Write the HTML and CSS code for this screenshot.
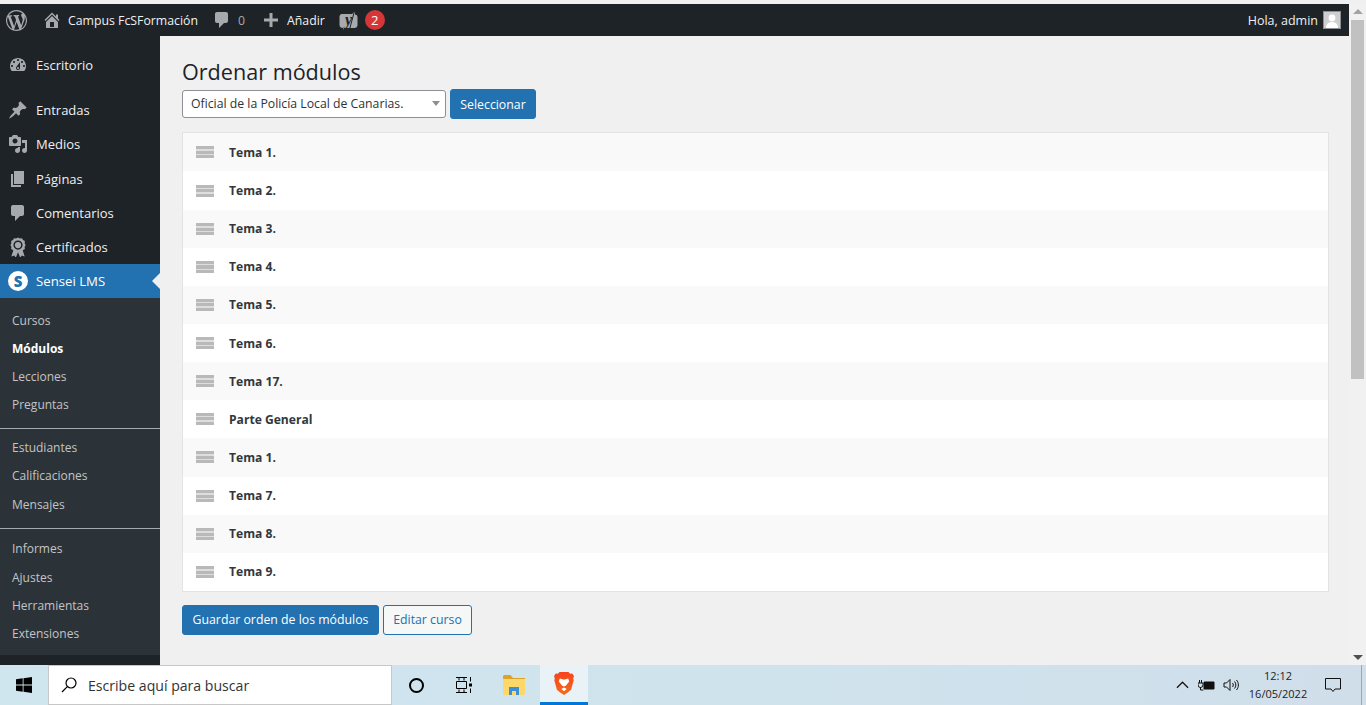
FILE: index.html
```html
<!DOCTYPE html>
<html lang="es">
<head>
    <meta charset="UTF-8">
    <title>Ordenar módulos</title>
    <link rel="stylesheet" href="styles.css">
</head>
<body>
    <div class="window">
        <div class="page">
            <div class="adminbar">
                <svg class="ab-wp" viewBox="0 0 20 20"><path d="M20 10c0-5.51-4.49-10-10-10C4.48 0 0 4.49 0 10c0 5.52 4.48 10 10 10 5.51 0 10-4.48 10-10zM7.78 15.37L4.37 6.22c.55-.02 1.17-.08 1.17-.08.5-.06.44-1.13-.06-1.11 0 0-1.45.11-2.37.11-.18 0-.37 0-.58-.01C4.12 2.69 6.87 1.11 10 1.11c2.33 0 4.45.87 6.05 2.34-.68-.11-1.65.39-1.65 1.58 0 .74.45 1.36.9 2.1.35.61.55 1.36.55 2.46 0 1.49-1.4 5-1.4 5l-3.03-8.37c.54-.02.82-.17.82-.17.5-.05.44-1.25-.06-1.22 0 0-1.44.12-2.38.12-.87 0-2.33-.12-2.33-.12-.5-.03-.56 1.2-.06 1.22l.92.08 1.26 3.41zM17.41 10c.24-.64.74-1.87.43-4.25.7 1.29 1.05 2.71 1.05 4.25 0 3.29-1.73 6.24-4.4 7.78.97-2.59 1.94-5.2 2.92-7.78zM6.1 18.09C3.12 16.65 1.11 13.53 1.11 10c0-1.3.23-2.48.72-3.59C3.25 10.3 4.67 14.2 6.1 18.09zm4.03-6.63l2.58 6.98c-.86.29-1.76.45-2.71.45-.79 0-1.57-.11-2.29-.33.81-2.38 1.62-4.74 2.42-7.1z"/></svg>
                <svg class="ab-icon ab-home" viewBox="0 0 20 20"><path d="M16 8.5l1.53 1.53-1.06 1.06L10 4.62l-6.47 6.47-1.06-1.06L10 2.5l4 4v-2h2v4zm-6-2.46l6 5.99V18H4v-5.97zM12 17v-5H8v5h4z"/></svg>
                <span class="ab-site">Campus FcSFormación</span>
                <svg class="ab-icon ab-comment" viewBox="0 0 20 20"><path d="M5 2h9c1.1 0 2 .9 2 2v7c0 1.1-.9 2-2 2h-2l-5 5v-5H5c-1.1 0-2-.9-2-2V4c0-1.1.9-2 2-2z"/></svg>
                <span class="ab-count">0</span>
                <svg class="ab-icon ab-plus" viewBox="0 0 20 20"><path d="M17 8.500v3h-5.500V17h-3v-5.500H3v-3h5.500V3h3v5.500z"/></svg>
                <span class="ab-new">Añadir</span>
                <svg class="ab-yoast" viewBox="0 -1 19 21"><path d="M3 3h10l3-3v3.500c1.500.300 2.500 1.200 2.500 2.500v8c0 1.700-1.300 3-3 3H7l-3 1.500V17c-2 0-3.500-1.300-3.500-3V6C.5 4.300 1.500 3 3 3z"/><path class="yoast-slash" d="M15.500 0l-5 18.500"/><text x="9.500" y="14" class="yoast-y">y</text></svg>
                <span class="ab-badge">2</span>
                <span class="ab-spacer"></span>
                <span class="ab-hello">Hola, admin</span>
                <span class="ab-avatar"><svg viewBox="0 0 16 16"><circle cx="8" cy="6" r="3.400"/><path d="M2 16c0-4 2.500-6 6-6s6 2 6 6z"/></svg></span>
            </div>
            <div class="wp-body">
                <nav class="sidebar">
                    <a class="menu-item first"><svg viewBox="0 0 20 20"><path d="M3.760 16h12.480c1.100-1.370 1.760-3.110 1.760-5 0-4.420-3.580-8-8-8s-8 3.580-8 8c0 1.890.660 3.630 1.760 5zM10 4c.550 0 1 .450 1 1s-.450 1-1 1-1-.450-1-1 .450-1 1-1zM6 6c.550 0 1 .450 1 1s-.450 1-1 1-1-.450-1-1 .450-1 1-1zm8 0c.550 0 1 .450 1 1s-.450 1-1 1-1-.450-1-1 .450-1 1-1zm-5.370 5.550L12 7v6c0 1.100-.900 2-2 2s-2-.900-2-2c0-.570.240-1.080.630-1.450zM4 10c.550 0 1 .450 1 1s-.450 1-1 1-1-.450-1-1 .450-1 1-1zm12 0c.550 0 1 .450 1 1s-.450 1-1 1-1-.450-1-1 .450-1 1-1zm-5 3c0-.550-.450-1-1-1s-1 .450-1 1 .450 1 1 1 1-.450 1-1z"/></svg>Escritorio</a>
                    <div class="menu-gap"></div>
                    <a class="menu-item"><svg viewBox="0 0 20 20"><path d="M10.440 3.020l1.820-1.820 6.360 6.350-1.830 1.820c-1.050-.680-2.480-.570-3.410.360l-.750.750c-.920.930-1.040 2.350-.350 3.410l-1.830 1.820-2.410-2.410-2.800 2.790c-.420.420-3.380 2.710-3.800 2.290s1.860-3.390 2.280-3.810l2.790-2.790L4.100 9.360l1.830-1.820c1.050.690 2.480.570 3.400-.360l.750-.750c.930-.920 1.050-2.350.360-3.410z"/></svg>Entradas</a>
                    <a class="menu-item"><svg viewBox="0 0 20 20"><path d="M13 11V4c0-.550-.450-1-1-1h-1.670L9 1H5L3.670 3H2c-.550 0-1 .450-1 1v7c0 .550.450 1 1 1h10c.550 0 1-.450 1-1zM7 4.500c1.380 0 2.500 1.120 2.500 2.500S8.380 9.500 7 9.500 4.500 8.380 4.500 7 5.620 4.500 7 4.500zM14 6h5v10.500c0 1.380-1.120 2.500-2.500 2.500S14 17.880 14 16.500s1.120-2.500 2.500-2.500c.170 0 .340.020.500.050V9h-3V6zm-4 8.050V13h2v3.500c0 1.380-1.120 2.500-2.500 2.500S7 17.880 7 16.500 8.120 14 9.500 14c.170 0 .340.020.500.050z"/></svg>Medios</a>
                    <a class="menu-item"><svg viewBox="0 0 20 20"><path d="M6 15V2h10v13H6zm-1 1h8v2H3V5h2v11z"/></svg>Páginas</a>
                    <a class="menu-item"><svg viewBox="0 0 20 20"><path d="M5 2h9c1.100 0 2 .900 2 2v7c0 1.100-.900 2-2 2h-2l-5 5v-5H5c-1.100 0-2-.900-2-2V4c0-1.100.900-2 2-2z"/></svg>Comentarios</a>
                    <a class="menu-item"><svg viewBox="0 0 20 20"><path fill-rule="evenodd" d="M10 .5l1.900 1 2.100-.300 1 1.900 1.900 1-.300 2.100 1 1.900-1 1.900.300 2.100-1.900 1-.300.400 2 6-3-1-1.500 2.200-2.200-5.400-2.200 5.400L6.300 18.500l-3 1 2-6-.300-.400-1.900-1 .300-2.100-1-1.900 1-1.900-.300-2.100 1.900-1 1-1.900 2.100.300zM10 3.500a4.600 4.600 0 1 0 0 9.200 4.600 4.600 0 0 0 0-9.200zm0 1.500a3.100 3.100 0 1 1 0 6.200 3.100 3.100 0 0 1 0-6.200z"/></svg>Certificados</a>
                    <a class="menu-item current"><span class="sensei-logo">S</span>Sensei LMS</a>
                    <div class="submenu">
                        <a class="sub-item">Cursos</a>
                        <a class="sub-item active">Módulos</a>
                        <a class="sub-item">Lecciones</a>
                        <a class="sub-item">Preguntas</a>
                        <div class="sub-sep"></div>
                        <a class="sub-item">Estudiantes</a>
                        <a class="sub-item">Calificaciones</a>
                        <a class="sub-item">Mensajes</a>
                        <div class="sub-sep sub-sep-wide"></div>
                        <a class="sub-item">Informes</a>
                        <a class="sub-item">Ajustes</a>
                        <a class="sub-item">Herramientas</a>
                        <a class="sub-item">Extensiones</a>
                    </div>
                </nav>
                <main class="content">
                    <h1>Ordenar módulos</h1>
                    <div class="picker">
                        <div class="select">Oficial de la Policía Local de Canarias.<span class="select-arrow"></span></div>
                        <button class="btn btn-primary btn-pick">Seleccionar</button>
                    </div>
                    <div class="module-list" id="moduleList"></div>
                    <div class="actions">
                        <button class="btn btn-primary btn-save">Guardar orden de los módulos</button>
                        <button class="btn btn-secondary">Editar curso</button>
                    </div>
                </main>
            </div>
        </div>
        <div class="scrollbar">
            <span class="scroll-up"></span>
            <div class="scroll-track"><div class="scroll-thumb"></div></div>
            <span class="scroll-down"></span>
        </div>
    </div>

    <div class="taskbar">
        <div class="start">
            <svg viewBox="0 0 16 16"><path d="M0 2.200l6.700-.900v6.300H0zM7.500 1.200L16 0v7.600H7.500zM0 8.400h6.700v6.300L0 13.800zM7.500 8.400H16V16l-8.500-1.200z"/></svg>
        </div>
        <div class="search">
            <svg viewBox="0 0 16 16"><circle cx="10" cy="6" r="5"/><path d="M6.300 9.700L1 15"/></svg>
            <span>Escribe aquí para buscar</span>
        </div>
        <div class="tb-btn"><span class="cortana"></span></div>
        <div class="tb-btn">
            <svg class="taskview" viewBox="0 0 17 16"><path d="M0 .5h11M3 .5v3M8 .5v3M0 15.500h11M3 15.500v-3M8 15.500v-3M.5 4.500h10v7H.5zM14.500 0v4.500M14.500 11.500V16"/><path class="taskview-dot" d="M13 6.500h3v3h-3z"/></svg>
        </div>
        <div class="tb-btn tb-folder">
            <svg viewBox="0 0 22 20"><path fill="#dea226" d="M0 1.500C0 .700.700 0 1.500 0h6L10 3h12v3H0z"/><path fill="#fcd76a" d="M0 4h22v14.500c0 .800-.700 1.500-1.500 1.500h-19C.700 20 0 19.300 0 18.500z"/><path fill="#3d8fd8" d="M6 12h10v8h-3v-4H9v4H6z"/></svg>
        </div>
        <div class="tb-btn tb-active">
            <svg viewBox="0 0 20 23">
                <defs><linearGradient id="braveFill" x1="0" y1="0" x2="0" y2="1"><stop offset="0" stop-color="#f6441c"/><stop offset="1" stop-color="#f56a1c"/></linearGradient></defs>
                <path fill="url(#braveFill)" d="M5.500 0h9l1.500 1.700 2.200-.300L20 4l-.800 2.500.500 1.800-2.600 9.400-3.300 2.700L10 23l-3.800-2.600-3.300-2.700L.300 8.300.800 6.500 0 4l1.800-2.600 2.200.300z"/>
                <path fill="#fff" d="M10 14.500l-1.800-.700-3.400-4.300 1-3 2.700.700L10 7.800l1.500-.600 2.700-.700 1 3-3.400 4.300zM7.300 17L10 15.500l2.700 1.500L10 19.300z"/>
            </svg>
        </div>
        <span class="tb-spacer"></span>
        <div class="tray">
            <svg class="tray-chevron" viewBox="0 0 14 8"><path d="M1 7l6-6 6 6"/></svg>
            <svg class="tray-battery" viewBox="0 0 17 12"><path class="outline" d="M1.500 1v3M3.500 1v3M0 4h5v2a2.500 2.500 0 0 1-5 0zM2.500 8v3h3"/><path class="fill" d="M6 3h10v7H6z"/></svg>
            <svg class="tray-sound" viewBox="0 0 16 14"><path d="M1 5h2.500L7 1.500v11L3.500 9H1zM9.500 5c1 1.200 1 2.800 0 4M11.500 3.500c1.800 2 1.800 5 0 7M13.500 2c2.500 3 2.500 7 0 10"/></svg>
            <div class="clock"><div>12:12</div><div>16/05/2022</div></div>
            <svg class="tray-notify" viewBox="0 0 16 16"><path d="M.5 1.500h15v10.500H10l-2 2.500-2-2.500H.5z"/></svg>
            <span class="show-desktop"></span>
        </div>
    </div>

    <script>
        // filas de la lista de módulos
        const modules = ['Tema 1.', 'Tema 2.', 'Tema 3.', 'Tema 4.', 'Tema 5.', 'Tema 6.', 'Tema 17.', 'Parte General', 'Tema 1.', 'Tema 7.', 'Tema 8.', 'Tema 9.'];
        const list = document.getElementById('moduleList');
        modules.forEach(name => {
            const row = document.createElement('div');
            row.className = 'module-row';
            row.innerHTML = `<span class="handle"></span><span class="module-name">${name}</span>`;
            list.appendChild(row);
        });
    </script>
</body>
</html>
```

FILE: styles.css
```css
* {
    box-sizing: border-box;
}

html, body {
    margin: 0;
    height: 705px;
    overflow: hidden;
}

body {
    font-family: 'Open Sans', 'Noto Sans', sans-serif;
    font-size: 13px;
    color: #3c434a;
    background: #f0f0f1;
    display: flex;
    flex-direction: column;
}

.window {
    height: 665px;
    display: flex;
    border-top: 4px solid #f0f0f0;
}

.page {
    flex: 1;
    display: flex;
    flex-direction: column;
    min-width: 0;
}

/* admin bar */
.adminbar {
    height: 32px;
    flex: none;
    background: #1d2327;
    color: #f0f0f1;
    display: flex;
    align-items: center;
    padding-left: 6px;
    font-size: 12.300px;
}

.adminbar svg {
    fill: #a7aaad;
    flex: none;
}

.ab-wp {
    width: 21px;
    height: 21px;
}

.ab-icon {
    width: 20px;
    height: 20px;
}

.ab-home {
    margin-left: 15px;
}

.ab-site {
    margin-left: 6px;
}

.ab-comment {
    margin-left: 14px;
}

.ab-count {
    margin-left: 6px;
    color: #a7aaad;
}

.ab-plus {
    margin-left: 16px;
}

.ab-new {
    margin-left: 6px;
}

.ab-yoast {
    width: 19px;
    height: 21px;
    margin-left: 14px;
}

.yoast-slash {
    fill: none;
    stroke: #1d2327;
    stroke-width: 1;
}

.yoast-y {
    font-family: 'Liberation Serif', serif;
    font-size: 16px;
    font-style: italic;
    font-weight: bold;
    fill: #1d2327;
    text-anchor: middle;
}

.ab-badge {
    width: 20px;
    height: 20px;
    border-radius: 50%;
    background: #d63638;
    color: #fff;
    font-size: 13px;
    margin-left: 7px;
    display: flex;
    align-items: center;
    justify-content: center;
}

.ab-spacer {
    flex: 1;
}

.ab-hello {
    font-size: 12.500px;
}

.ab-avatar {
    width: 18px;
    height: 18px;
    margin: 0 8px 0 5px;
    background: #cfcfcf;
    border: 1px solid #8c8f94;
    overflow: hidden;
    display: block;
}

.ab-avatar svg {
    display: block;
    width: 16px;
    height: 16px;
    fill: #fff;
}

/* sidebar */
.wp-body {
    flex: 1;
    display: flex;
    min-height: 0;
}

.sidebar {
    width: 160px;
    flex: none;
    background: #1d2327;
    color: #f0f0f1;
    font-size: 13px;
}

.menu-item {
    height: 34.2px;
    display: flex;
    align-items: center;
    padding-left: 8px;
    gap: 8px;
}

.menu-item.first {
    margin-top: 12px;
}

.menu-gap {
    height: 11px;
}

.menu-item svg {
    width: 20px;
    height: 20px;
    fill: #a7aaad;
    flex: none;
}

.menu-item.current {
    background: #2271b1;
    color: #fff;
    position: relative;
    font-size: 13.200px;
}

.menu-item.current::after {
    content: "";
    position: absolute;
    right: 0;
    top: 9px;
    border: 8px solid transparent;
    border-right-color: #f0f0f1;
    border-left-width: 0;
}

.sensei-logo {
    width: 20px;
    height: 20px;
    border-radius: 50%;
    background: #fff;
    color: #2271b1;
    font-weight: 800;
    font-size: 15px;
    display: flex;
    align-items: center;
    justify-content: center;
}

.submenu {
    background: #2c3338;
    padding: 7.600px 0 8px;
}

.sub-item {
    display: flex;
    align-items: center;
    height: 28.200px;
    padding-left: 12px;
    font-size: 12px;
    color: #c3c4c7;
}

.sub-item.active {
    color: #fff;
    font-weight: 700;
}

.sub-sep {
    height: 1px;
    background: #a7aaad;
    margin: 9px 0 5px;
}

.sub-sep-wide {
    margin: 10px 0 5.500px;
}

/* content */
.content {
    flex: 1;
    min-width: 0;
    padding: 0 20px 0 22px;
    color: #1d2327;
}

h1 {
    margin: 21px 0 0;
    font-size: 21.600px;
    font-weight: 400;
    line-height: 29px;
    color: #1d2327;
}

.picker {
    display: flex;
    align-items: center;
    gap: 4px;
    margin-top: 3px;
}

.select {
    width: 264px;
    height: 28px;
    background: #fff;
    border: 1px solid #8c8f94;
    border-radius: 3px;
    padding-left: 8px;
    font-size: 12.250px;
    line-height: 26px;
    color: #2c3338;
    position: relative;
}

.select-arrow {
    position: absolute;
    right: 5px;
    top: 10px;
    border: 4px solid transparent;
    border-top: 5px solid #8c8f94;
    border-bottom-width: 0;
}

.btn {
    font-family: inherit;
    font-size: 12.300px;
    height: 30px;
    border-radius: 3px;
    padding: 0;
    white-space: nowrap;
    cursor: pointer;
}

.btn-primary {
    background: #2271b1;
    border: 1px solid #2271b1;
    color: #fff;
}

.btn-pick {
    width: 86px;
}

.btn-secondary {
    background: #f6f7f7;
    border: 1px solid #2271b1;
    color: #2271b1;
}

.module-list {
    margin-top: 13.300px;
    background: #fff;
    border: 1px solid #e2e3e4;
}

.module-row {
    height: 38.150px;
    display: flex;
    align-items: center;
    padding-left: 13px;
}

.module-row:nth-child(odd) {
    background: #f9f9f9;
}

.handle {
    width: 18px;
    height: 12px;
    background: repeating-linear-gradient(#b9b9b9 0 3px, #dedede 3px 4.500px);
    flex: none;
}

.module-name {
    margin-left: 15px;
    font-size: 12.100px;
    font-weight: 700;
    color: #32373c;
}

.actions {
    display: flex;
    gap: 4px;
    margin-top: 12.700px;
}

.btn-save {
    width: 197px;
}

.btn-secondary {
    width: 89px;
}

/* scrollbar */
.scrollbar {
    width: 17px;
    flex: none;
    background: #f1f1f1;
    display: flex;
    flex-direction: column;
    align-items: center;
    padding-left: 1px;
}

.scroll-up, .scroll-down {
    flex: none;
    height: 16px;
    width: 0;
    border-left: 5px solid transparent;
    border-right: 5px solid transparent;
}

.scroll-up {
    border-bottom: 5px solid #a3a3a3;
    margin-top: 5px;
    height: 0;
    margin-bottom: 6px;
}

.scroll-down {
    border-top: 5px solid #505050;
    margin-bottom: 5px;
    height: 0;
    margin-top: 6px;
}

.scroll-track {
    flex: 1;
    width: 100%;
    padding: 0 2px 0 0;
}

.scroll-thumb {
    width: 13px;
    height: 359px;
    background: #c1c1c1;
    margin-left: 1px;
}

/* taskbar */
.taskbar {
    height: 40px;
    flex: none;
    background: linear-gradient(90deg, #cfe6ef, #cfe3ed 60%, #d0deea);
    display: flex;
    align-items: center;
    color: #1a1a1a;
}

.start {
    width: 48px;
    height: 40px;
    display: flex;
    align-items: center;
    justify-content: center;
}

.start svg {
    width: 16px;
    height: 16px;
    fill: #000;
}

.search {
    width: 344px;
    height: 40px;
    background: #fff;
    border: 1px solid #c7c7c7;
    display: flex;
    align-items: center;
    padding-left: 12px;
    gap: 11px;
    font-family: 'Open Sans', sans-serif;
    font-size: 14.100px;
    color: #333;
}

.search svg {
    width: 16px;
    height: 16px;
    fill: none;
    stroke: #000;
    stroke-width: 1.200;
    flex: none;
}

.tb-btn {
    width: 48px;
    height: 40px;
    display: flex;
    align-items: center;
    justify-content: center;
}

.tb-btn svg {
    width: 20px;
    height: 18px;
}

.cortana {
    width: 15px;
    height: 15px;
    border: 2px solid #000;
    border-radius: 50%;
}

.tb-btn .taskview {
    width: 17px;
    height: 16px;
    fill: none;
    stroke: #000;
    stroke-width: 1;
}

.taskview-dot {
    fill: #000;
    stroke: none;
}

.tb-folder {
    width: 52px;
}

.tb-folder svg {
    width: 22px;
    height: 20px;
}

.tb-active {
    background: #e8f2f7;
    border-bottom: 3px solid #0078d7;
}

.tb-active svg {
    height: 23px;
    width: 22px;
}

.tb-spacer {
    flex: 1;
}

.tray {
    display: flex;
    align-items: center;
    height: 40px;
}

.tray svg {
    flex: none;
    fill: none;
    stroke: #111;
    stroke-width: 1;
}

.tray .tray-chevron {
    width: 13px;
    height: 8px;
    stroke-width: 1.300;
}

.tray-battery {
    width: 17px;
    height: 12px;
    margin-left: 9px;
}

.tray-battery .fill {
    fill: #111;
}

.tray-sound {
    width: 16px;
    height: 14px;
    margin-left: 8px;
}

.clock {
    width: 70px;
    margin-left: 4px;
    text-align: center;
    font-size: 11px;
    line-height: 18px;
    color: #222;
}

.tray-notify {
    width: 16px;
    height: 16px;
    margin-left: 12px;
}

.show-desktop {
    width: 1px;
    height: 40px;
    margin-left: 20px;
    margin-right: 4px;
    background: #9aa9b2;
}
```
